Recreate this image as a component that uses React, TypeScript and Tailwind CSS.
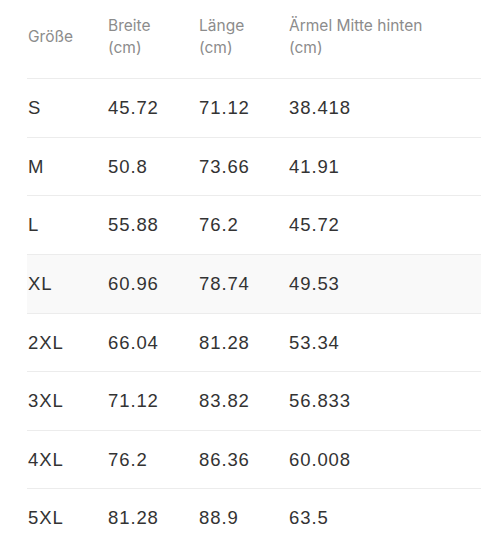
const rows = [
  ["S", "45.72", "71.12", "38.418"],
  ["M", "50.8", "73.66", "41.91"],
  ["L", "55.88", "76.2", "45.72"],
  ["XL", "60.96", "78.74", "49.53"],
  ["2XL", "66.04", "81.28", "53.34"],
  ["3XL", "71.12", "83.82", "56.833"],
  ["4XL", "76.2", "86.36", "60.008"],
  ["5XL", "81.28", "88.9", "63.5"],
];

export default function App() {
  return (
    <div className="w-[481px] h-[550px] bg-white overflow-hidden">
      <div className="ml-[27px]">
        <div
          className="grid grid-cols-[81px_91px_90px_1fr] h-[78px] items-center pb-[4px] text-[15.5px] leading-[22px] text-[#8c8c8c]"
          style={{ fontFamily: "Inter, 'Noto Sans', sans-serif" }}
        >
          <div className="pl-px">Größe</div>
          <div>Breite<br />(cm)</div>
          <div>Länge<br />(cm)</div>
          <div>Ärmel Mitte hinten<br />(cm)</div>
        </div>
        {rows.map((r, i) => (
          <div
            key={r[0]}
            className={`grid grid-cols-[81px_91px_90px_1fr] h-[58.65px] items-center border-t border-[#ececec] text-[18.5px] tracking-[0.9px] text-[#333333] ${i === 3 ? "bg-[#f9f9f9]" : ""}`}
            style={{ fontFamily: "'Liberation Sans', Arial, sans-serif" }}
          >
            <div className="pl-px">{r[0]}</div>
            <div>{r[1]}</div>
            <div>{r[2]}</div>
            <div>{r[3]}</div>
          </div>
        ))}
      </div>
    </div>
  );
}
